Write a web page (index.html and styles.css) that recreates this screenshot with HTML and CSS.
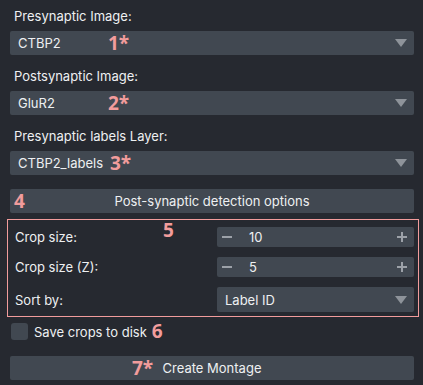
FILE: index.html
```html
<!DOCTYPE html>
<html lang="en">
<head>
    <meta charset="UTF-8">
    <title>Synapse Montage</title>
    <link rel="stylesheet" href="styles.css">
</head>
<body>

<div class="panel">
    <div class="field-label">Presynaptic Image:</div>
    <div class="combo">
        <span>CTBP2</span>
        <span class="arrow"></span>
        <span class="note note-1">1*</span>
    </div>

    <div class="field-label">Postsynaptic Image:</div>
    <div class="combo">
        <span>GluR2</span>
        <span class="arrow"></span>
        <span class="note note-2">2*</span>
    </div>

    <div class="field-label">Presynaptic labels Layer:</div>
    <div class="combo">
        <span>CTBP2_labels</span>
        <span class="arrow"></span>
        <span class="note note-3">3*</span>
    </div>

    <button class="button options-button">
        Post-synaptic detection options
        <span class="note note-4">4</span>
    </button>

    <!-- Options group outlined in pink -->
    <div class="options-box">
        <span class="note note-5">5</span>

        <div class="row-label">Crop size:</div>
        <div class="spinbox">
            <span class="minus"></span>
            <span class="value">10</span>
            <span class="plus"></span>
        </div>

        <div class="row-label">Crop size (Z):</div>
        <div class="spinbox">
            <span class="minus"></span>
            <span class="value">5</span>
            <span class="plus"></span>
        </div>

        <div class="row-label">Sort by:</div>
        <div class="combo combo-sort">
            <span>Label ID</span>
            <span class="arrow"></span>
        </div>
    </div>

    <label class="check-row">
        <span class="checkbox"></span>
        <span>Save crops to disk</span>
        <span class="note note-6">6</span>
    </label>

    <button class="button montage-button">
        Create Montage
        <span class="note note-7">7*</span>
    </button>
</div>

</body>
</html>
```

FILE: styles.css
```css
/* General styles */
* {
    box-sizing: border-box;
    margin: 0;
    padding: 0;
}
body {
    background-color: #262930;
    color: #eef0f2;
    font-family: Inter, "Noto Sans", sans-serif;
    font-size: 13px;
}
.panel {
    width: 423px;
    padding: 8px 9px 0 10px;
}
.field-label {
    height: 16px;
    line-height: 16px;
    padding-left: 4px;
    margin-bottom: 7px;
}
.combo + .field-label {
    margin-top: 13px;
}

/* Dropdowns */
.combo {
    position: relative;
    display: flex;
    align-items: center;
    justify-content: space-between;
    height: 24px;
    padding: 0 7px 0 8px;
    background-color: #414851;
    border-radius: 2px;
}
.arrow {
    width: 0;
    height: 0;
    border-left: 6.5px solid transparent;
    border-right: 6.5px solid transparent;
    border-top: 8px solid #8e939a;
}

/* Annotation marks */
.note {
    position: absolute;
    top: 0;
    line-height: 24px;
    color: #f29c9c;
    font-family: "Open Sans", sans-serif;
    font-weight: 700;
    font-size: 19px;
}
.note-1, .note-2 { left: 98px; }
.note-3 { left: 100px; }
.note-4 { left: 4px; }
.note-5 { left: 155px; top: 1px; line-height: 18px; }
.note-6 { position: static; margin-left: 5px; line-height: 17px; }
.note-7 { left: 122px; }

/* Buttons */
.button {
    position: relative;
    display: block;
    width: 100%;
    height: 24px;
    margin-top: 14px;
    border: none;
    border-radius: 2px;
    background-color: #414851;
    color: #eef0f2;
    font-family: inherit;
    font-size: 13px;
}

/* Pink outlined group */
.options-box {
    position: relative;
    display: grid;
    grid-template-columns: 203px 1fr;
    row-gap: 10px;
    align-items: center;
    width: 412px;
    margin: 6px 0 0 -3px;
    padding: 7px 4px 4px 6px;
    border: 1px solid #f29c9c;
}
.row-label {
    padding-left: 1px;
}
.spinbox {
    display: flex;
    align-items: center;
    height: 20px;
    padding: 0 7px 0 5px;
    background-color: #414851;
    border-radius: 2px;
}
.spinbox .value {
    flex: 1;
    margin-left: 17px;
}
.minus {
    width: 10px;
    height: 1.5px;
    background-color: #9ca1a8;
}
.plus {
    position: relative;
    width: 10px;
    height: 10px;
}
.plus::before,
.plus::after {
    content: "";
    position: absolute;
    background-color: #9ca1a8;
}
.plus::before {
    left: 0;
    top: 4.25px;
    width: 10px;
    height: 1.5px;
}
.plus::after {
    left: 4.25px;
    top: 0;
    width: 1.5px;
    height: 10px;
}
.combo-sort {
    height: 25px;
    padding-left: 8px;
}

/* Checkbox row */
.check-row {
    display: flex;
    align-items: center;
    margin-top: 6px;
    height: 17px;
    padding-left: 1px;
}
.checkbox {
    width: 17px;
    height: 17px;
    margin-right: 6px;
    background-color: #414851;
    border-radius: 3px;
}
.montage-button {
    margin-top: 16px;
}
```
